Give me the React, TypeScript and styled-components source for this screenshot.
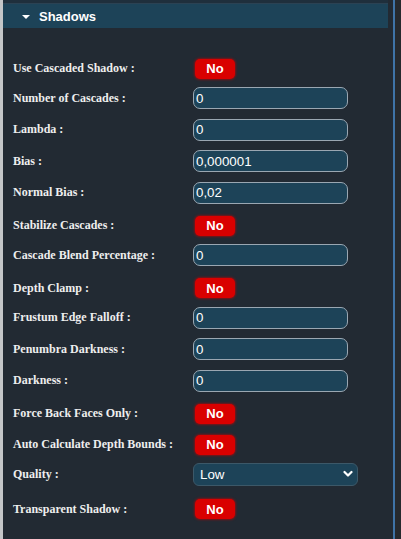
import React from "react";
import styled, { createGlobalStyle } from "styled-components";

const Global = createGlobalStyle`
  html, body { margin: 0; padding: 0; background: #26292d; }
  body { width: 401px; height: 539px; overflow: hidden; }
`;

const Frame = styled.div`
  display: flex;
  width: 401px;
  height: 539px;
  background: #26292d;
`;

const LeftStrip = styled.div`
  width: 3px;
  background: #c4c6c8;
  flex: none;
`;

const Panel = styled.div`
  width: 390px;
  flex: none;
  background: #222a33;
  border-right: 2px solid #3f73a6;
  display: flex;
  flex-direction: column;
`;

const TopEdge = styled.div`
  height: 3px;
  margin-right: 5px;
  background: #1f2f3c;
  border-bottom: 1px solid #2b4253;
`;

const Header = styled.div`
  height: 24px;
  margin-right: 5px;
  background: #1d4358;
  display: flex;
  align-items: center;
  padding-left: 19px;
  gap: 9px;
  color: #ffffff;
  font-family: "Liberation Sans", Arial, sans-serif;
  font-weight: bold;
  font-size: 13px;
`;

const Caret = styled.span`
  width: 0;
  height: 0;
  border-left: 4px solid transparent;
  border-right: 4px solid transparent;
  border-top: 4px solid #ffffff;
  margin-top: 1px;
`;

const Body = styled.div`
  padding: 23.5px 0 0 10px;
  display: flex;
  flex-direction: column;
`;

const Row = styled.div<{ $h: number; $pt?: number; $pb?: number }>`
  display: grid;
  grid-template-columns: 180px 1fr;
  align-items: center;
  height: ${(p) => p.$h}px;
  padding-top: ${(p) => p.$pt ?? 0}px;
  padding-bottom: ${(p) => p.$pb ?? 0}px;
  box-sizing: border-box;
`;

const Label = styled.span`
  font-family: "Liberation Serif", "Times New Roman", serif;
  font-weight: bold;
  font-size: 12px;
  color: #eeeeee;
  white-space: nowrap;
`;

const TextBox = styled.div`
  width: 155px;
  height: 22px;
  box-sizing: border-box;
  border: 1px solid #9aa7b2;
  border-radius: 7px;
  background: #1d4358;
  color: #ffffff;
  font-family: "Liberation Sans", Arial, sans-serif;
  font-size: 13.33px;
  display: flex;
  align-items: center;
  padding-left: 2px;
`;

const Toggle = styled.div`
  width: 40px;
  height: 20px;
  margin-left: 2px;
  border-radius: 5px;
  background: #d90000;
  box-shadow: 0 0 2px 1px rgba(200, 0, 0, 0.55);
  color: #ffffff;
  font-family: "Liberation Sans", Arial, sans-serif;
  font-weight: bold;
  font-size: 13px;
  display: flex;
  align-items: center;
  justify-content: center;
`;

const Select = styled.div`
  width: 165px;
  height: 23px;
  box-sizing: border-box;
  border: 1px solid #3c5868;
  border-radius: 6px;
  background: #1d4358;
  color: #ffffff;
  font-family: "Liberation Sans", Arial, sans-serif;
  font-size: 13.33px;
  display: flex;
  align-items: center;
  justify-content: space-between;
  padding: 0 4px 0 6px;
`;

type Item =
  | { kind: "toggle"; label: string }
  | { kind: "input"; label: string; value: string }
  | { kind: "select"; label: string; value: string };

const items: Item[] = [
  { kind: "toggle", label: "Use Cascaded Shadow :" },
  { kind: "input", label: "Number of Cascades :", value: "0" },
  { kind: "input", label: "Lambda :", value: "0" },
  { kind: "input", label: "Bias :", value: "0,000001" },
  { kind: "input", label: "Normal Bias :", value: "0,02" },
  { kind: "toggle", label: "Stabilize Cascades :" },
  { kind: "input", label: "Cascade Blend Percentage :", value: "0" },
  { kind: "toggle", label: "Depth Clamp :" },
  { kind: "input", label: "Frustum Edge Falloff :", value: "0" },
  { kind: "input", label: "Penumbra Darkness :", value: "0" },
  { kind: "input", label: "Darkness :", value: "0" },
  { kind: "toggle", label: "Force Back Faces Only :" },
  { kind: "toggle", label: "Auto Calculate Depth Bounds :" },
  { kind: "select", label: "Quality :", value: "Low" },
  { kind: "toggle", label: "Transparent Shadow :" },
];

const Chevron = () => (
  <svg width="10" height="8" viewBox="0 0 10 8">
    <path d="M1.5 2 L5 5.5 L8.5 2" stroke="#ffffff" strokeWidth="2.2" fill="none" strokeLinecap="round" strokeLinejoin="round" />
  </svg>
);

export default function App() {
  return (
    <>
      <Global />
      <Frame>
        <LeftStrip />
        <Panel>
          <TopEdge />
          <Header>
            <Caret />
            <span>Shadows</span>
          </Header>
          <Body>
            {items.map((it, i) => {
              if (it.kind === "toggle")
                return (
                  <Row key={i} $h={31} $pt={3.5}>
                    <Label>{it.label}</Label>
                    <Toggle>No</Toggle>
                  </Row>
                );
              if (it.kind === "input")
                return (
                  <Row key={i} $h={31.5}>
                    <Label>{it.label}</Label>
                    <TextBox>{it.value}</TextBox>
                  </Row>
                );
              return (
                <Row key={i} $h={33.5} $pb={2}>
                  <Label>{it.label}</Label>
                  <Select>
                    <span>{it.value}</span>
                    <Chevron />
                  </Select>
                </Row>
              );
            })}
          </Body>
        </Panel>
      </Frame>
    </>
  );
}
